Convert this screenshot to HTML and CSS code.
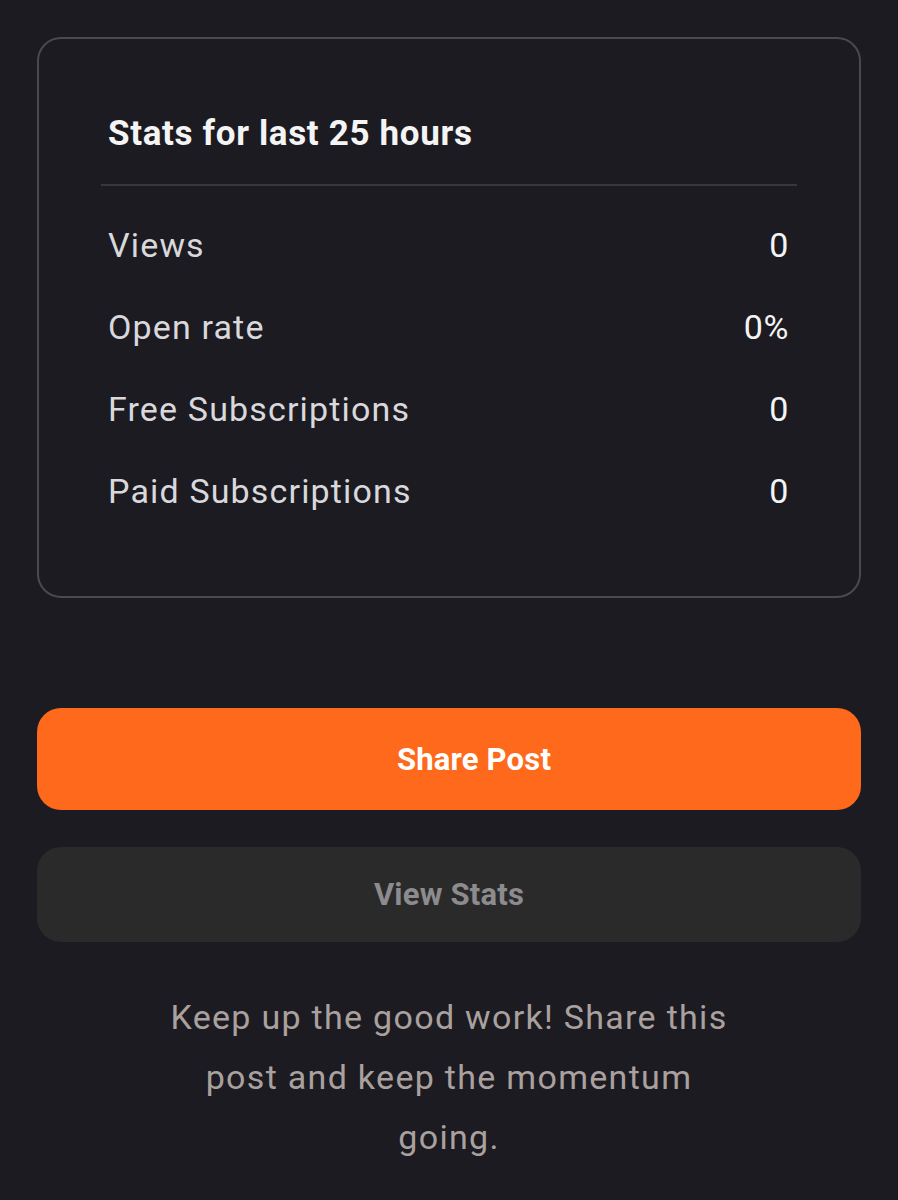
FILE: index.html
```html
<!DOCTYPE html>
<html>
<head>
<meta charset="utf-8">
<link rel="stylesheet" href="styles.css">
</head>
<body>
<div class="page">
  <section class="card">
    <h2 class="card-title">Stats for last 25 hours</h2>
    <div class="divider"></div>
    <div class="rows">
      <div class="row"><span class="label">Views</span><span class="value">0</span></div>
      <div class="row"><span class="label">Open rate</span><span class="value">0%</span></div>
      <div class="row"><span class="label">Free Subscriptions</span><span class="value">0</span></div>
      <div class="row"><span class="label">Paid Subscriptions</span><span class="value">0</span></div>
    </div>
  </section>
  <button class="btn btn-primary"><span class="btn-icon-slot"></span>Share Post</button>
  <button class="btn btn-secondary">View Stats</button>
  <p class="note">Keep up the good work! Share this post and keep the momentum going.</p>
</div>
</body>
</html>
```
FILE: styles.css
```css
html, body {
  margin: 0;
  padding: 0;
  background: #1c1b22;
}
body {
  font-family: Roboto, "Liberation Sans", sans-serif;
  width: 898px;
  height: 1200px;
  overflow: hidden;
}
.page {
  padding: 37px 37px 0 37px;
  display: flex;
  flex-direction: column;
}
.card {
  border: 2px solid #4a494e;
  border-radius: 24px;
  height: 561px;
  box-sizing: border-box;
  padding: 0 62px 0 62px;
  display: flex;
  flex-direction: column;
}
.card-title {
  margin: 0;
  padding: 73px 0 0 7px;
  font-size: 35px;
  letter-spacing: 0.65px;
  line-height: 44px;
  font-weight: 700;
  color: #f4f4f4;
}
.divider {
  margin-top: 28px;
  height: 2px;
  background: #38373c;
}
.rows {
  display: flex;
  flex-direction: column;
  padding: 37px 8px 0 7px;
  gap: 38px;
}
.row {
  display: flex;
  justify-content: space-between;
  font-size: 34px;
  letter-spacing: 1.15px;
  line-height: 44px;
}
.label {
  color: #d9d8dc;
}
.value {
  color: #f4f4f4;
  letter-spacing: 0.6px;
}
.btn {
  font-family: Roboto, "Liberation Sans", sans-serif;
  border: none;
  border-radius: 24px;
  font-weight: 700;
  font-size: 31px;
  letter-spacing: 0.2px;
  width: 100%;
  display: flex;
  align-items: center;
  justify-content: center;
  padding: 0;
}
.btn-icon-slot {
  width: 50px;
  height: 1px;
}
.btn-primary {
  margin-top: 110px;
  height: 102px;
  background: #ff691b;
  color: #ffffff;
}
.btn-secondary {
  margin-top: 37px;
  height: 95px;
  background: #2a2a2b;
  color: #8c8b8d;
  letter-spacing: 0.2px;
}
.note {
  margin: 45px auto 0;
  width: 570px;
  text-align: center;
  color: #aaa19e;
  font-size: 34px;
  letter-spacing: 1.3px;
  line-height: 60px;
}
```
